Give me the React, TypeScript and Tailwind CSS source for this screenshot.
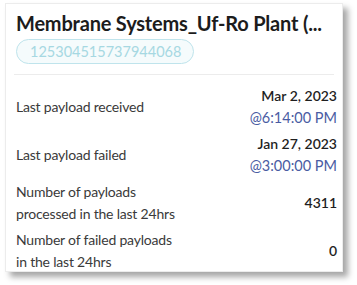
import React from "react";

const rows = [
  { label: ["Last payload received"], value: ["Mar 2, 2023", "@6:14:00 PM"] },
  { label: ["Last payload failed"], value: ["Jan 27, 2023", "@3:00:00 PM"] },
  { label: ["Number of payloads", "processed in the last 24hrs"], value: ["4311"] },
  { label: ["Number of failed payloads", "in the last 24hrs"], value: ["0"] },
];

export default function App() {
  return (
    <div className="w-[357px] h-[285px] bg-white pt-[3px] pl-[5px]" style={{ fontFamily: "Lato, 'Open Sans', sans-serif" }}>
      <div className="w-[338px] h-[269px] bg-white border border-[#ececec] shadow-[5px_5px_6px_rgba(0,0,0,0.35)] pl-[8px] pr-[5px] pt-[6px]">
        <div className="pl-[2px] text-[20px] leading-[26px] font-bold text-[#1c1c1c] whitespace-nowrap tracking-[-0.2px]">
          Membrane Systems_Uf-Ro Plant (...
        </div>
        <div className="pl-[2px] mt-[3px]">
          <div className="inline-flex items-center h-[25px] pl-[13px] pr-[12px] rounded-full border border-[#bfe4ec] bg-[#f5fbfc] text-[14.5px] text-[#a6d8e2]" style={{ fontFamily: "Lato, sans-serif" }}>
            125304515737944068
          </div>
        </div>
        <div className="mt-[10px] mr-[3px] h-px bg-[#ececec]" />
        <div className="pt-[10px] flex flex-col gap-[4px]">
          {rows.map((r, i) => (
            <div key={i} className="flex items-center justify-between h-[44px] pl-[2px]">
              <div className="text-[14px] leading-[22px] text-[#3a3a3a] tracking-[-0.2px]">
                {r.label.map((l, j) => (
                  <div key={j}>{l}</div>
                ))}
              </div>
              <div className="text-right text-[14px] leading-[22px]">
                {r.value.map((v, j) => (
                  <div key={j} className={j === 0 ? "font-semibold text-[#1f1f1f]" : "text-[#4a5ca3] text-[14.5px]"}>
                    {v}
                  </div>
                ))}
              </div>
            </div>
          ))}
        </div>
      </div>
    </div>
  );
}
